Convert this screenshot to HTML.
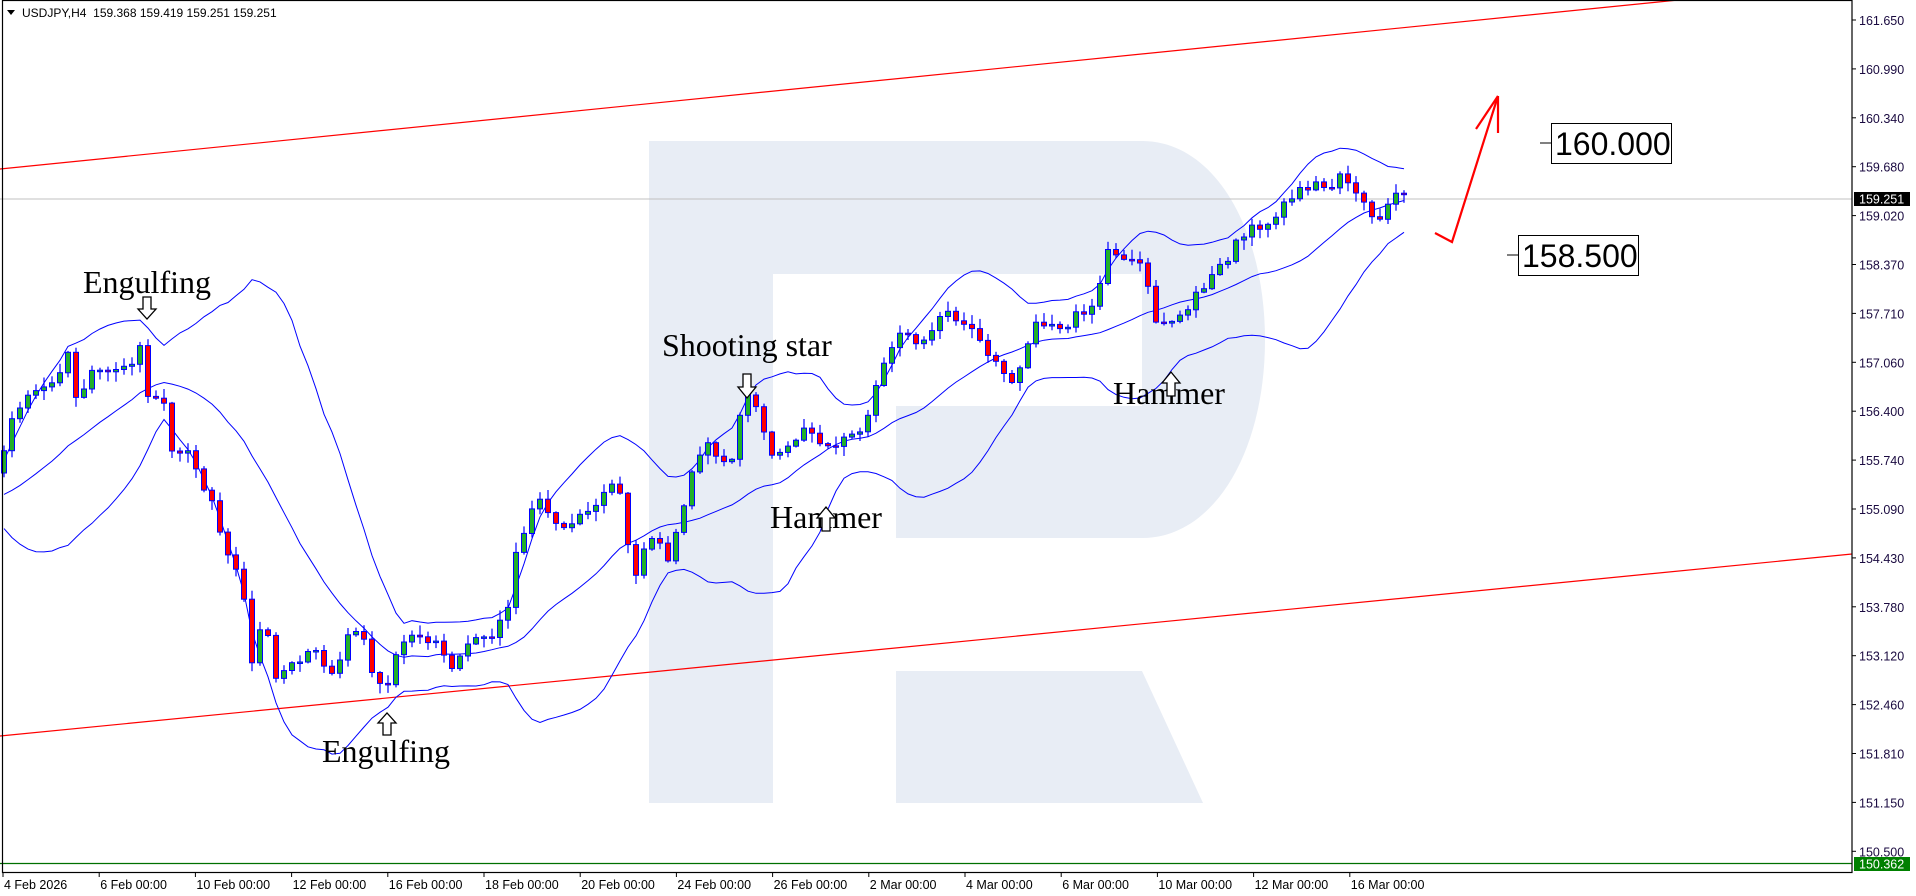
<!DOCTYPE html>
<html><head><meta charset="utf-8"><style>
html,body{margin:0;padding:0;background:#fff;width:1916px;height:896px;overflow:hidden}
svg{display:block}
.ax{font-family:"Liberation Sans",sans-serif;font-size:12.5px;fill:#1a0a40}
.an{font-family:"Liberation Serif",serif;font-size:32px;fill:#000}
.bx{font-family:"Liberation Sans",sans-serif;font-size:32px;fill:#000}
</style></head><body>
<svg id="s" width="1916" height="896" viewBox="0 0 1916 896" xmlns="http://www.w3.org/2000/svg">
<rect width="1916" height="896" fill="#fff"/>
<g fill="#e8edf5">
<rect x="649" y="141" width="124" height="662"/>
<rect x="773" y="141" width="369" height="133"/>
<path d="M1142,141 C1215,141 1265,230 1265,340 C1265,450 1215,538 1142,538 Z"/>
<rect x="896" y="406" width="246" height="132"/>
<polygon points="896,671 1142,671 1203,803 896,803"/>
</g>
<line x1="0" y1="199" x2="1852" y2="199" stroke="#c0c0c0" stroke-width="1"/>
<line x1="0" y1="169" x2="1678" y2="0" stroke="#ff0000" stroke-width="1.2"/>
<line x1="0" y1="736" x2="1852" y2="554" stroke="#ff0000" stroke-width="1.2"/>
<line x1="0" y1="863.5" x2="1852" y2="863.5" stroke="#007000" stroke-width="1.2"/>
<g id="chart"></g>
<polyline points="1435,233 1452,242 1498,96" fill="none" stroke="#ff0000" stroke-width="2.2"/>
<line x1="1498" y1="96" x2="1476" y2="129" stroke="#ff0000" stroke-width="2.2"/>
<line x1="1498" y1="96" x2="1498" y2="133" stroke="#ff0000" stroke-width="2.2"/>
<line x1="1540" y1="143" x2="1551" y2="143" stroke="#000"/>
<rect x="1551.5" y="123.5" width="120" height="40" fill="#fff" stroke="#000"/>
<text class="bx" x="1555" y="155">160.000</text>
<line x1="1507" y1="255" x2="1518" y2="255" stroke="#000"/>
<rect x="1518.5" y="235.5" width="120" height="40" fill="#fff" stroke="#000"/>
<text class="bx" x="1522" y="267">158.500</text>
<text class="an" x="83" y="293">Engulfing</text>
<text class="an" x="662" y="356">Shooting star</text>
<text class="an" x="770" y="528">Hammer</text>
<text class="an" x="1113" y="404">Hammer</text>
<text class="an" x="322" y="762">Engulfing</text>
<g fill="#fff" stroke="#000" stroke-width="1.3">
<path d="M143,297 h8 v12 h5 l-9,10 l-9,-10 h5 z"/>
<path d="M743,374 h8 v13 h5 l-9,11 l-9,-11 h5 z"/>
<path d="M822,531 h8 v-13 h5 l-9,-11 l-9,11 h5 z"/>
<path d="M1167,396 h8 v-13 h5 l-9,-11 l-9,11 h5 z"/>
<path d="M383,735 h8 v-12 h5 l-9,-10 l-9,10 h5 z"/>
</g>
<rect x="2.5" y="0.5" width="1849.5" height="872" fill="none" stroke="#000" stroke-width="1.2"/>
<path d="M7,10 h8 l-4,5 z" fill="#000"/>
<text x="22" y="17" style="font-family:'Liberation Sans',sans-serif;font-size:12px;fill:#000">USDJPY,H4&#160;&#160;159.368 159.419 159.251 159.251</text>
<g id="axis"></g>
<rect x="1854" y="192" width="56" height="14" fill="#000"/>
<text x="1859" y="203.5" style="font-family:'Liberation Sans',sans-serif;font-size:12.5px;fill:#fff">159.251</text>
<rect x="1854" y="857" width="56" height="14" fill="#008000"/>
<text x="1859" y="868.5" style="font-family:'Liberation Sans',sans-serif;font-size:12.5px;fill:#fff">150.362</text>
</svg>
<script>
(function(){
var S=1916/1564;
var K=[[-160,430],[-120,410],[-80,420],[-40,395],[-10,390],[2,378],[8,345],[20,325],[35,318],[50,300],[57,285],[62,325],[75,305],[90,305],[100,300],[112,290],[118,270],[121,325],[135,330],[140,365],[155,370],[165,395],[175,410],[180,440],[190,460],[200,490],[205,545],[215,500],[225,555],[240,540],[255,530],[270,555],[285,520],[295,515],[305,555],[315,565],[320,540],[335,515],[345,520],[360,530],[370,548],[380,525],[395,520],[405,515],[415,495],[420,450],[430,430],[440,405],[455,430],[470,425],[480,415],[495,400],[505,395],[512,440],[518,470],[530,435],[545,455],[555,430],[565,385],[575,360],[585,370],[595,385],[605,335],[612,320],[620,345],[630,370],[640,365],[650,355],[660,345],[670,365],[680,370],[690,355],[705,350],[715,315],[725,285],[735,270],[745,280],[755,280],[765,260],[775,255],[785,265],[795,270],[805,290],[815,300],[825,310],[835,295],[845,260],[855,265],[870,270],[880,255],[895,250],[905,200],[915,215],[925,215],[935,220],[940,260],[950,262],[960,260],[970,255],[975,240],[990,225],[1000,215],[1010,195],[1020,185],[1030,190],[1040,175],[1050,165],[1060,155],[1075,150],[1085,155],[1095,140],[1102,150],[1110,160],[1120,180],[1130,175],[1140,160],[1148,158]];
function interp(x){for(var i=0;i<K.length-1;i++){if(x<=K[i+1][0]){var a=K[i],b=K[i+1];var t=(x-a[0])/(b[0]-a[0]);return (a[1]+(b[1]-a[1])*t)*S;}}return K[K.length-1][1]*S;}
var seed=12345;function rnd(){seed=(seed*1103515245+12345)%2147483648;return seed/2147483648;}
var W=20,N=176,closes=[],xs=[];
for(var i=-W;i<N;i++){var x=4+8*i;xs.push(x);closes.push(interp(x/S)+(rnd()-0.5)*10);}
var out='';var up=[],mid=[],lo=[];
for(var j=0;j<closes.length;j++){
 if(j>=W-1){var s=0;for(var k=j-W+1;k<=j;k++)s+=closes[k];var m=s/W;var v=0;for(k=j-W+1;k<=j;k++)v+=(closes[k]-m)*(closes[k]-m);var d=Math.sqrt(v/W);
 var x=xs[j];if(x>=0){up.push(x+','+(m-2*d).toFixed(1));mid.push(x+','+m.toFixed(1));lo.push(x+','+(m+2*d).toFixed(1));}}
}
out+='<polyline points="'+up.join(' ')+'" fill="none" stroke="#0000ff" stroke-width="1"/>';
out+='<polyline points="'+mid.join(' ')+'" fill="none" stroke="#0000ff" stroke-width="1"/>';
out+='<polyline points="'+lo.join(' ')+'" fill="none" stroke="#0000ff" stroke-width="1"/>';
for(j=W;j<closes.length;j++){
 var x=xs[j],o=closes[j-1],c=closes[j];
 var hi=Math.min(o,c)-rnd()*9-1,l=Math.max(o,c)+rnd()*9+1;
 out+='<line x1="'+x+'" y1="'+hi.toFixed(1)+'" x2="'+x+'" y2="'+l.toFixed(1)+'" stroke="#0000ff" stroke-width="1.2"/>';
 var top=Math.min(o,c),h=Math.max(Math.abs(o-c),1.5);
 out+='<rect x="'+(x-2.5)+'" y="'+top.toFixed(1)+'" width="5" height="'+h.toFixed(1)+'" fill="'+(c<o?'#22b02a':'#ff0000')+'" stroke="#0000ff" stroke-width="1"/>';
}
document.getElementById('chart').innerHTML=out;
var ax='';var labs=['161.650','160.990','160.340','159.680','159.020','158.370','157.710','157.060','156.400','155.740','155.090','154.430','153.780','153.120','152.460','151.810','151.150','150.500'];
for(i=0;i<labs.length;i++){var y=20+i*48.9;ax+='<line x1="1852" y1="'+y+'" x2="1856" y2="'+y+'" stroke="#000"/><text class="ax" x="1859" y="'+(y+5)+'">'+labs[i]+'</text>';}
var d=['4 Feb 2026','6 Feb 00:00','10 Feb 00:00','12 Feb 00:00','16 Feb 00:00','18 Feb 00:00','20 Feb 00:00','24 Feb 00:00','26 Feb 00:00','2 Mar 00:00','4 Mar 00:00','6 Mar 00:00','10 Mar 00:00','12 Mar 00:00','16 Mar 00:00'];
for(i=0;i<d.length;i++){var x=3+i*96.2;ax+='<line x1="'+x+'" y1="872" x2="'+x+'" y2="877" stroke="#000"/><text class="ax" x="'+(x+1)+'" y="889" style="fill:#000">'+d[i]+'</text>';}
document.getElementById('axis').innerHTML=ax;
})();
</script>
</body></html>
